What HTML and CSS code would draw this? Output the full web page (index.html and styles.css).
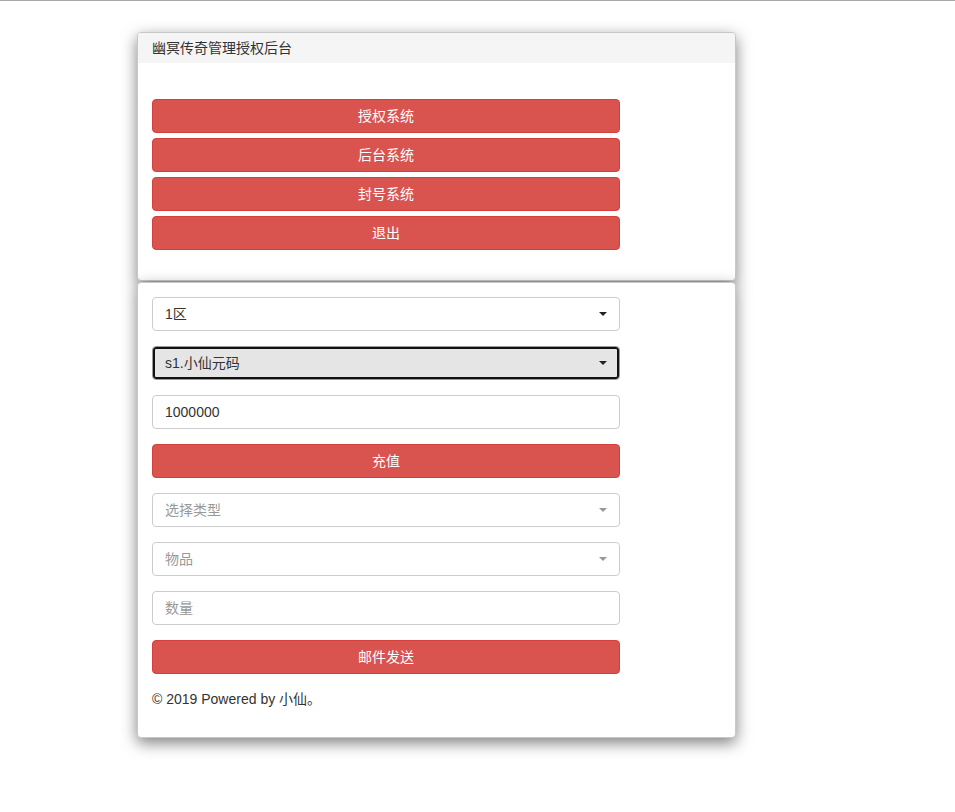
FILE: index.html
```html
<!DOCTYPE html>
<html lang="zh">
<head>
<meta charset="utf-8">
<title>幽冥传奇管理授权后台</title>
<link rel="stylesheet" href="styles.css">
</head>
<body>
<div class="topline"></div>
<div class="wrap">
  <div class="panel">
    <div class="panel-heading">幽冥传奇管理授权后台</div>
    <div class="panel-body first">
      <div class="btn-stack">
        <a class="btn">授权系统</a>
        <a class="btn">后台系统</a>
        <a class="btn">封号系统</a>
        <a class="btn">退出</a>
      </div>
    </div>
  </div>
  <div class="panel second">
    <div class="panel-body">
      <div class="form">
        <div class="control select"><span>1区</span><i class="caret"></i></div>
        <div class="control select focus"><span>s1.小仙元码</span><i class="caret"></i></div>
        <div class="control"><span>1000000</span></div>
        <a class="btn">充值</a>
        <div class="control select placeholder"><span>选择类型</span><i class="caret light"></i></div>
        <div class="control select placeholder"><span>物品</span><i class="caret light"></i></div>
        <div class="control placeholder"><span>数量</span></div>
        <a class="btn">邮件发送</a>
      </div>
      <p class="footer">© 2019 Powered by 小仙。</p>
    </div>
  </div>
</div>
</body>
</html>
```

FILE: styles.css
```css
html, body {
  margin: 0;
  padding: 0;
  background: #fff;
  font-family: "Liberation Sans", Arial, "Noto Sans CJK SC", sans-serif;
  font-size: 14px;
  line-height: 20px;
  color: #333;
}
.topline {
  height: 1px;
  background: #a9a9a9;
}
.wrap {
  width: 599px;
  margin-left: 137px;
  padding-top: 31px;
  padding-bottom: 60px;
}
.panel {
  background: #fff;
  border: 1px solid #c8c8c8;
  border-radius: 4px;
  box-shadow: 0 5px 15px rgba(0, 0, 0, 0.5);
  overflow: hidden;
}
.panel.second {
  margin-top: 1px;
}
.panel-heading {
  background: #f5f5f5;
  padding: 5px 14px;
  height: 20px;
  color: #333;
}
.panel-body {
  padding: 14px 14px 28px;
}
.panel-body.first {
  padding: 36px 14px 30px;
}
.btn-stack {
  display: flex;
  flex-direction: column;
  gap: 5px;
  width: 468px;
}
.btn {
  display: block;
  box-sizing: border-box;
  width: 468px;
  height: 34px;
  line-height: 20px;
  padding: 6px 12px;
  text-align: center;
  color: #fff;
  background: #d9534f;
  border: 1px solid #d43f3a;
  border-radius: 4px;
}
.form {
  display: flex;
  flex-direction: column;
  gap: 15px;
  width: 468px;
}
.control {
  box-sizing: border-box;
  height: 34px;
  padding: 6px 12px;
  border: 1px solid #ccc;
  border-radius: 4px;
  background: #fff;
  color: #333;
  display: flex;
  align-items: center;
  justify-content: space-between;
}
.control.focus {
  background: #e5e5e5;
  border: 1px solid #999;
  box-shadow: inset 0 0 0 2px #111;
}
.control.placeholder {
  color: #999;
}
.caret {
  display: block;
  width: 0;
  height: 0;
  border-left: 4px solid transparent;
  border-right: 4px solid transparent;
  border-top: 4px solid #222;
  margin-right: 0;
}
.caret.light {
  border-top-color: #999;
}
.footer {
  margin: 15px 0 0;
  color: #333;
}
```
